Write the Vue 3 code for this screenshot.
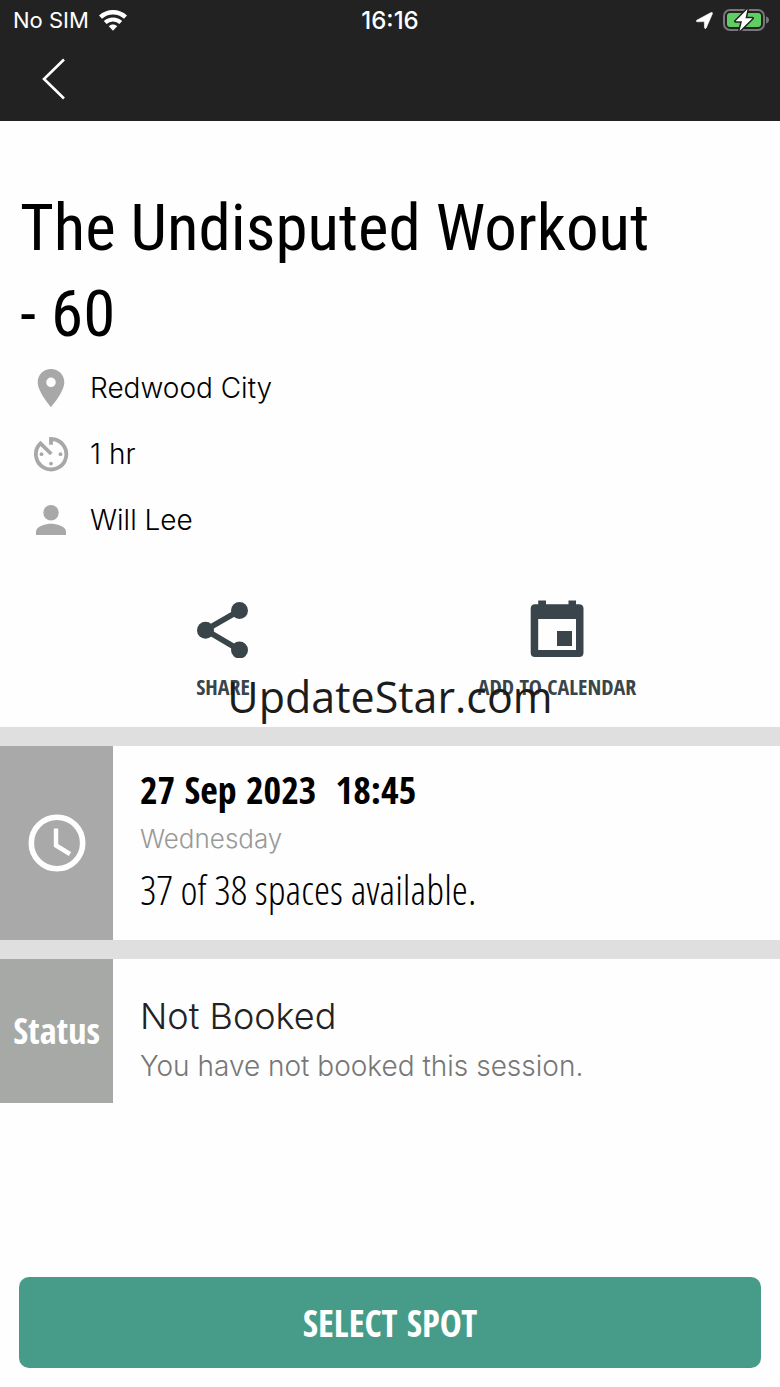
<script setup>
const details = [
  { icon: 'pin', text: 'Redwood City' },
  { icon: 'timer', text: '1 hr' },
  { icon: 'person', text: 'Will Lee' },
]
</script>

<template>
  <div class="screen">
    <header class="header">
      <div class="statusbar">
        <div class="carrier">
          <span>No SIM</span>
          <svg class="wifi" viewBox="0 0 28 21" aria-hidden="true">
            <g fill="none" stroke="#fff">
              <path d="M1.5 7.2C8.5.6 19.5.6 26.500 7.200" stroke-width="4.400" />
              <path d="M6.200 12.500C10.500 8.400 17.500 8.400 21.800 12.500" stroke-width="4" />
            </g>
            <path d="M9.800 16.200C12 14 16 14 18.200 16.200L14 20.800Z" fill="#fff" />
          </svg>
        </div>
        <time class="clock">16:16</time>
        <div class="indicators">
          <svg class="location" viewBox="0 0 17 17" aria-hidden="true">
            <path d="M.8 8.200L15 .6Q16.800-.1 16.400 1.800L10.200 16Q9.200 17.400 8.500 15.800L8.300 9.600L1.200 9.800Q-.5 9.400.8 8.200Z" fill="#fff" stroke="#fff" stroke-width=".6" />
          </svg>
          <svg class="battery" viewBox="0 0 47 24" aria-hidden="true">
            <rect x="1" y="2" width="40" height="20" rx="6" fill="none" stroke="#77777a" stroke-width="2" />
            <path d="M43 8.500Q46 9.500 46 12T43 15.500Z" fill="#77777a" />
            <rect x="4" y="5" width="34" height="14" rx="3" fill="#5fce62" />
            <path d="M24.500 1L12.500 13.200H19L16.500 23L29.500 10.300H22.500Z" fill="#fff" stroke="#222" stroke-width="3" paint-order="stroke" stroke-linejoin="round" />
          </svg>
        </div>
      </div>
      <button class="back" type="button" aria-label="Back">
        <svg viewBox="0 0 24 42" aria-hidden="true">
          <path d="M22 1.500L2 21L22 40.500" fill="none" stroke="#fff" stroke-width="2.600" />
        </svg>
      </button>
    </header>

    <main class="content">
      <section class="intro">
        <h1>The Undisputed Workout - 60</h1>
        <ul class="details">
          <li v-for="item in details" :key="item.icon">
            <svg v-if="item.icon === 'pin'" viewBox="0 0 36 40" aria-hidden="true">
              <path fill-rule="evenodd" d="M18 1C10.500 1 4.700 6.800 4.700 14.200C4.700 24 18 39 18 39S31.300 24 31.300 14.200C31.300 6.800 25.500 1 18 1ZM18 9.500A4.800 4.800 0 1 1 18 19.100A4.800 4.800 0 1 1 18 9.500Z" />
            </svg>
            <svg v-else-if="item.icon === 'timer'" viewBox="0 0 36 40" aria-hidden="true">
              <path d="M18 10.700V5A15.200 15.200 0 1 1 7.500 9.300L18.300 20" fill="none" stroke="#a8a8a8" stroke-width="3.800" />
              <circle cx="8.500" cy="20.200" r="1.900" />
              <circle cx="27.500" cy="20.200" r="1.900" />
              <circle cx="18" cy="29.600" r="1.900" />
            </svg>
            <svg v-else viewBox="0 0 36 40" aria-hidden="true">
              <circle cx="18" cy="12.700" r="7.700" />
              <path d="M3 35V31.500C3 26.300 13 23.800 18 23.800S33 26.300 33 31.500V35Z" />
            </svg>
            <span>{{ item.text }}</span>
          </li>
        </ul>
        <div class="actions">
          <button type="button" class="action">
            <svg viewBox="0 0 54 58" aria-hidden="true">
              <path d="M43.500 10.500L9.500 30L43.500 50" fill="none" stroke="#39454a" stroke-width="5.600" />
              <circle cx="43.500" cy="10.500" r="8.500" />
              <circle cx="9.500" cy="30.300" r="8.500" />
              <circle cx="43.500" cy="50" r="8.500" />
            </svg>
            <span>SHARE</span>
          </button>
          <button type="button" class="action">
            <svg viewBox="0 0 54 58" aria-hidden="true">
              <path fill-rule="evenodd" d="M8.200.5H16V4.300H38.500V.5H46V4.300H49Q53.500 4.300 53.500 8.800V52.500Q53.500 57 49 57H5Q.7 57 .7 52.500V8.800Q.7 4.300 5 4.300H8.200ZM8.200 19V50H46V19Z" />
              <rect x="27" y="31" width="15" height="15" />
            </svg>
            <span>ADD TO CALENDAR</span>
          </button>
          <div class="watermark">UpdateStar.com</div>
        </div>
      </section>

      <section class="panel session">
        <div class="tile">
          <svg viewBox="0 0 58 58" aria-hidden="true">
            <circle cx="29" cy="29" r="25.700" fill="none" stroke="#fff" stroke-width="5.600" />
            <path d="M28 14.500V31.500L42 40" fill="none" stroke="#fff" stroke-width="4.400" />
          </svg>
        </div>
        <div class="info">
          <p class="date">27 Sep 2023&nbsp; 18:45</p>
          <p class="weekday">Wednesday</p>
          <p class="spaces">37 of 38 spaces available.</p>
        </div>
      </section>

      <section class="panel status">
        <div class="tile">Status</div>
        <div class="info">
          <p class="state">Not Booked</p>
          <p class="note">You have not booked this session.</p>
        </div>
      </section>
    </main>

    <footer class="footer">
      <button type="button" class="select">SELECT SPOT</button>
    </footer>
  </div>
</template>

<style>
body {
  margin: 0;
  background: #fefefe;
}
</style>

<style scoped>
.screen {
  --title: "Roboto Condensed", "Liberation Sans Narrow", sans-serif;
  --condensed: "Open Sans Condensed", "Roboto Condensed", sans-serif;
  --condensed-light: "Open Sans Condensed Light", "Roboto Condensed", sans-serif;
  --light: "Inter", "Liberation Sans", sans-serif;
  display: flex;
  flex-direction: column;
  min-height: 100vh;
  color: #000;
  font-family: var(--light);
}

h1, p, ul {
  margin: 0;
  padding: 0;
}

button {
  border: 0;
  padding: 0;
  background: none;
  cursor: pointer;
}

.header {
  height: 121px;
  background: #222;
  color: #fff;
}

.statusbar {
  display: grid;
  grid-template-columns: 1fr auto 1fr;
  align-items: center;
  height: 40px;
  padding: 0 10px;
  font-size: 22px;
}

.carrier, .indicators {
  display: flex;
  align-items: center;
  gap: 10px;
}

.carrier {
  padding-left: 3px;
}

.indicators {
  justify-content: flex-end;
}

.clock {
  font-size: 24px;
  font-weight: 500;
}

.wifi {
  width: 28px;
  height: 21px;
}

.location {
  width: 17px;
  height: 17px;
}

.battery {
  width: 47px;
  height: 24px;
}

.back {
  display: flex;
  align-items: center;
  height: 78px;
  padding: 0 42px;
}

.back svg {
  width: 24px;
  height: 42px;
}

.intro {
  padding-top: 64px;
}

h1 {
  padding: 0 100px 0 20px;
  font: 400 65px/86px var(--title);
}

.details {
  list-style: none;
}

.details li {
  display: flex;
  align-items: center;
  gap: 21px;
  height: 62px;
  padding: 0 33px 4px;
  font-size: 28px;
  font-weight: 300;
}

.details svg {
  width: 36px;
  height: 40px;
  fill: #a8a8a8;
}

.actions {
  position: relative;
  display: grid;
  grid-template-columns: 1fr 1fr;
  padding: 45px 56px 28px;
}

.action {
  display: flex;
  flex-direction: column;
  align-items: center;
  gap: 15px;
  color: #39454a;
  font: 700 22px/26px var(--condensed);
}

.action svg {
  width: 54px;
  height: 58px;
  fill: #39454a;
}

.watermark {
  position: absolute;
  right: 0;
  bottom: 0;
  left: 0;
  color: #1c1c1c;
  font: 400 43px/60px "Open Sans", sans-serif;
  text-align: center;
  pointer-events: none;
}

.panel {
  display: grid;
  grid-template-columns: 113px 1fr;
  border-top: 19px solid #dfdfdf;
}

.tile {
  display: flex;
  align-items: center;
  justify-content: center;
  background: #a9a9a9;
}

.tile svg {
  width: 58px;
  height: 58px;
}

.session .info {
  padding: 18px 27px 26px;
}

.date {
  font: 700 38px/50px var(--condensed);
}

.weekday {
  color: #999;
  font-size: 26px;
  font-weight: 300;
  line-height: 50px;
}

.spaces {
  font: 300 41px/50px var(--condensed-light);
}

.status .tile {
  background: #a7a9a6;
  color: #fff;
  font: 700 36px/50px var(--condensed);
}

.status .info {
  padding: 32px 27px 12px;
}

.state {
  color: #222;
  font-size: 36px;
  font-weight: 300;
  line-height: 50px;
}

.note {
  color: #777;
  font-size: 28px;
  font-weight: 300;
  line-height: 50px;
}

.footer {
  margin-top: auto;
  padding: 19px;
}

.select {
  display: block;
  width: 100%;
  height: 91px;
  border-radius: 10px;
  background: #469c88;
  color: #fff;
  font: 700 37px/50px var(--condensed);
}
</style>
